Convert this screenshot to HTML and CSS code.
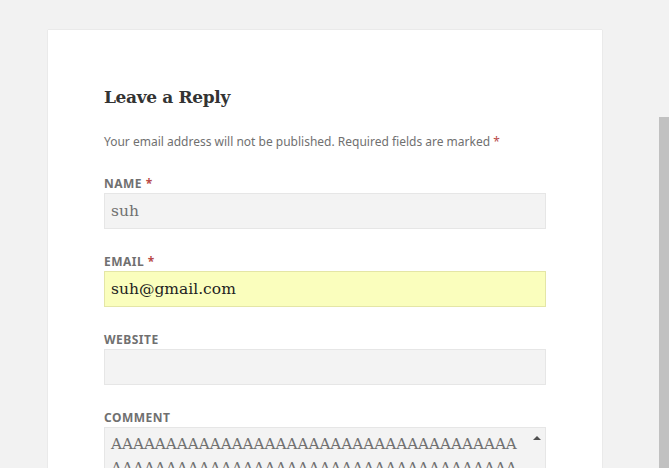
FILE: index.html
```html
<!DOCTYPE html>
<html lang="en">
<head>
<meta charset="utf-8">
<title>Leave a Reply</title>
<link rel="stylesheet" href="styles.css">
</head>
<body>
<div class="page">
  <section class="card">
    <h3 class="reply-title">Leave a Reply</h3>
    <p class="notes">Your email address will not be published. Required fields are marked <span class="req">*</span></p>
    <div class="field">
      <label class="label" for="author">Name <span class="req">*</span></label>
      <input class="input input-muted" id="author" type="text" value="suh">
    </div>
    <div class="field">
      <label class="label" for="email">Email <span class="req">*</span></label>
      <input class="input input-autofill" id="email" type="text" value="suh@gmail.com">
    </div>
    <div class="field">
      <label class="label" for="url">Website</label>
      <input class="input" id="url" type="text" value="">
    </div>
    <div class="field">
      <label class="label" for="comment">Comment</label>
      <div class="textarea-wrap">
        <textarea class="textarea" id="comment" rows="6">AAAAAAAAAAAAAAAAAAAAAAAAAAAAAAAAAAAAAAAAAAAAAAAAAAAAAAAAAAAAAAAAAAAAAAAAAAAAAAAAAAAAAAAAAAAAAAAAAAAAAAAAAAAAAAAAAAAAAAAAAAAAAAAAAAAAAAAAAAAAAAAAAAAAAAAAAAAAAAA</textarea>
        <span class="scroll-up"></span>
      </div>
    </div>
  </section>
</div>
<div class="side-bar"></div>
</body>
</html>
```

FILE: styles.css
```css
html, body {
  margin: 0;
  padding: 0;
  background: #f2f2f2;
  overflow: hidden;
}

.page {
  padding: 30px 0 0 48px;
}

.card {
  width: 554px;
  box-sizing: border-box;
  background: #fff;
  box-shadow: 0 0 1px rgba(0, 0, 0, 0.2);
  padding: 51px 56px 60px 56px;
}

.reply-title {
  margin: 0;
  font-family: "DejaVu Serif", "Liberation Serif", serif;
  font-weight: bold;
  font-size: 17px;
  letter-spacing: -0.35px;
  line-height: 32px;
  color: #333;
}

.notes {
  margin: 20px 0 24px;
  font-family: "Noto Sans", sans-serif;
  font-size: 12px;
  line-height: 18px;
  color: #707070;
}

.req {
  color: #b94a48;
}

.field {
  margin-bottom: 24px;
}

.label {
  display: block;
  font-family: "Noto Sans", sans-serif;
  font-weight: bold;
  font-size: 12px;
  line-height: 18px;
  letter-spacing: 0.04em;
  text-transform: uppercase;
  color: #707070;
  margin-bottom: 0;
}

.input {
  display: block;
  width: 100%;
  box-sizing: border-box;
  height: 36px;
  padding: 0 6px;
  border: 1px solid #e6e6e6;
  background: #f3f3f3;
  font-family: "DejaVu Serif", "Liberation Serif", serif;
  font-size: 15.5px;
  color: #333;
  outline: none;
}

.input-muted {
  color: #707070;
}

.input-autofill {
  background: #fafebd;
  border-color: #e4e6a6;
  color: #222;
}

.textarea-wrap {
  position: relative;
}

.textarea {
  display: block;
  width: 100%;
  box-sizing: border-box;
  height: 150px;
  padding: 4px 18px 0 6px;
  border: 1px solid #e6e6e6;
  background: #f3f3f3;
  font-family: "DejaVu Serif", "Liberation Serif", serif;
  font-size: 15.2px;
  line-height: 24px;
  color: #707070;
  resize: none;
  overflow: hidden;
  word-break: break-all;
  outline: none;
}

.scroll-up {
  position: absolute;
  top: 9px;
  right: 5px;
  width: 0;
  height: 0;
  border-left: 4px solid transparent;
  border-right: 4px solid transparent;
  border-bottom: 4px solid #505050;
}

.side-bar {
  position: fixed;
  top: 117px;
  right: 0;
  width: 10px;
  bottom: 0;
  background: #c1c1c1;
}
```
